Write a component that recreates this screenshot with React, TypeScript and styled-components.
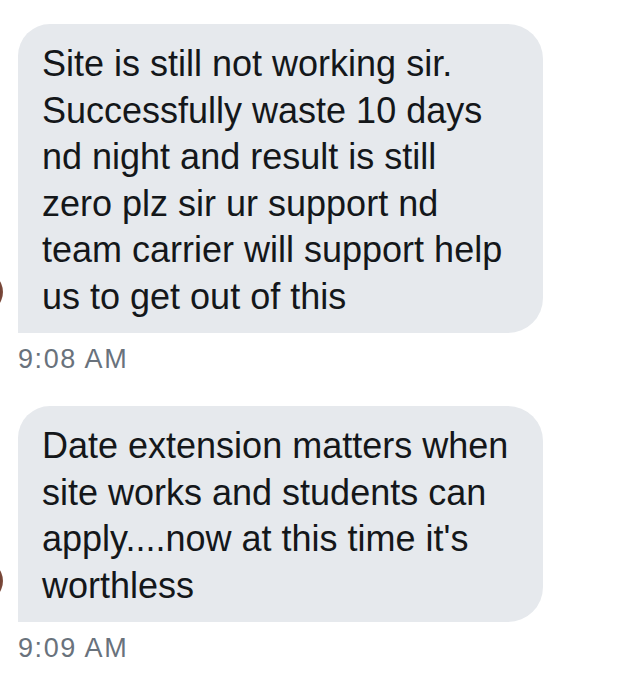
import React from "react";
import styled, { createGlobalStyle } from "styled-components";

const Global = createGlobalStyle`
  html, body { margin: 0; padding: 0; background: #ffffff; }
  body { font-family: "Liberation Sans", Arial, sans-serif; }
`;

const Page = styled.div`
  width: 630px;
  height: 693px;
  overflow: hidden;
  background: #ffffff;
  padding-top: 24px;
  box-sizing: border-box;
  display: flex;
  flex-direction: column;
  gap: 32px;
`;

const Group = styled.div`
  display: flex;
  flex-direction: column;
`;

const Row = styled.div`
  display: flex;
  align-items: flex-end;
`;

const Avatar = styled.div`
  flex: none;
  width: 42px;
  height: 42px;
  border-radius: 50%;
  margin-left: -39px;
  margin-right: 15px;
  margin-bottom: 20px;
  background: radial-gradient(circle at 40% 50%, #3a1a12 0%, #5e2c20 55%, #8a5a4a 85%, #c9a89c 100%);
`;

const Bubble = styled.div`
  width: 525px;
  box-sizing: border-box;
  background: #e6e9ed;
  border-radius: 32px 35px 35px 0;
  padding: 17px 20px 13px 24px;
  color: #14171a;
  font-size: 36px;
  line-height: 46.5px;
`;

const Time = styled.div`
  margin-top: 11px;
  margin-left: 18px;
  color: #69727c;
  font-size: 27px;
  line-height: 30px;
  letter-spacing: 1.6px;
`;

const messages = [
  {
    text: [
      "Site is still not working sir.",
      "Successfully waste 10 days",
      "nd night and result is still",
      "zero plz sir ur support nd",
      "team carrier will support help",
      "us to get out of this",
    ],
    time: "9:08 AM",
  },
  {
    text: [
      "Date extension matters when",
      "site works and students can",
      "apply....now at this time it's",
      "worthless",
    ],
    time: "9:09 AM",
  },
];

export default function App() {
  return (
    <>
      <Global />
      <Page>
        {messages.map((m, i) => (
          <Group key={i}>
            <Row>
              <Avatar />
              <Bubble>
                {m.text.map((line, j) => (
                  <div key={j}>{line}</div>
                ))}
              </Bubble>
            </Row>
            <Time>{m.time}</Time>
          </Group>
        ))}
      </Page>
    </>
  );
}
